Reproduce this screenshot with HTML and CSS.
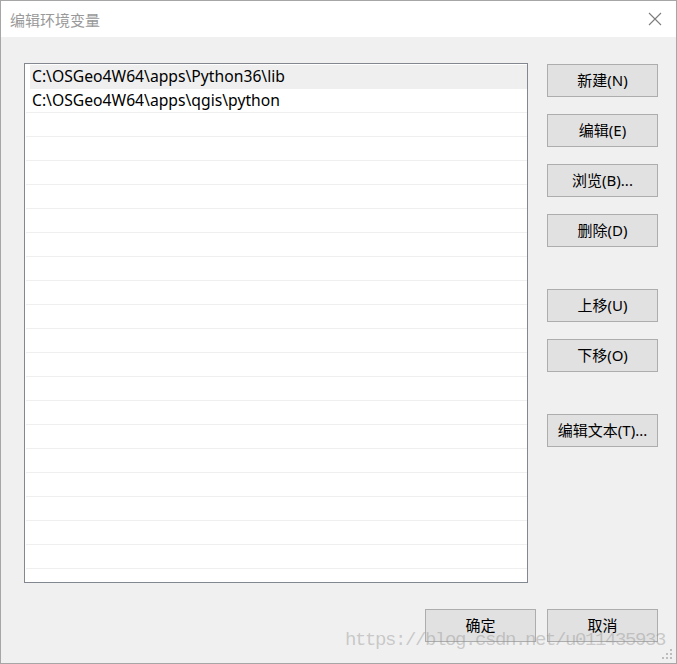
FILE: index.html
```html
<!DOCTYPE html>
<html lang="zh-CN">
<head>
<meta charset="utf-8">
<title>编辑环境变量</title>
<link rel="stylesheet" href="styles.css">
</head>
<body>
<div class="window">
  <div class="titlebar">
    <span class="title">编辑环境变量</span>
    <svg class="close" width="14" height="14" viewBox="0 0 14 14"><path d="M1 1 L13 13 M13 1 L1 13" stroke="#7c7c7c" stroke-width="1.1" fill="none"/></svg>
  </div>
  <div class="body">
    <div class="main">
      <div class="list">
        <div class="row selected">C:\OSGeo4W64\apps\Python36\lib</div>
        <div class="row">C:\OSGeo4W64\apps\qgis\python</div>
        <div class="row"></div><div class="row"></div><div class="row"></div><div class="row"></div>
        <div class="row"></div><div class="row"></div><div class="row"></div><div class="row"></div>
        <div class="row"></div><div class="row"></div><div class="row"></div><div class="row"></div>
        <div class="row"></div><div class="row"></div><div class="row"></div><div class="row"></div>
        <div class="row"></div><div class="row"></div><div class="row"></div>
      </div>
      <div class="side">
        <div class="group">
          <button class="btn">新建(N)</button>
          <button class="btn">编辑(E)</button>
          <button class="btn">浏览(B)...</button>
          <button class="btn">删除(D)</button>
        </div>
        <div class="group">
          <button class="btn">上移(U)</button>
          <button class="btn">下移(O)</button>
        </div>
        <div class="group">
          <button class="btn">编辑文本(T)...</button>
        </div>
      </div>
    </div>
    <div class="footer">
      <button class="btn">确定</button>
      <button class="btn">取消</button>
    </div>
  </div>
  <div class="watermark">https://blog.csdn.net/u011435933</div>
  <svg class="grip" width="12" height="12" viewBox="0 0 12 12">
    <rect x="8" y="0" width="2" height="2" fill="#bdbdbd"/>
    <rect x="4" y="4" width="2" height="2" fill="#bdbdbd"/>
    <rect x="8" y="4" width="2" height="2" fill="#bdbdbd"/>
    <rect x="0" y="8" width="2" height="2" fill="#bdbdbd"/>
    <rect x="4" y="8" width="2" height="2" fill="#bdbdbd"/>
    <rect x="8" y="8" width="2" height="2" fill="#bdbdbd"/>
  </svg>
</div>
</body>
</html>
```

FILE: styles.css
```css
* { box-sizing: border-box; }
html, body { margin: 0; padding: 0; background: #ffffff; }
body {
  font-family: "Noto Sans", "Noto Sans CJK SC", sans-serif;
  font-size: 15px;
  color: #000;
}
.window {
  position: relative;
  width: 677px;
  height: 664px;
  border: 1px solid #a6a6a6;
  background: #f0f0f0;
  display: flex;
  flex-direction: column;
}
.titlebar {
  height: 36px;
  background: #ffffff;
  display: flex;
  align-items: center;
  justify-content: space-between;
  padding: 0 14px 0 9px;
  flex: none;
}
.title {
  font-family: "Noto Sans CJK SC", sans-serif;
  font-size: 15px;
  color: #999999;
  line-height: 16px;
  margin-top: 1px;
}
.close { display: block; }
.body {
  flex: 1;
  display: flex;
  flex-direction: column;
  padding: 26px 18px 0 23px;
}
.main {
  display: flex;
  gap: 19px;
}
.list {
  width: 504px;
  height: 520px;
  border: 1px solid #828790;
  background: #ffffff;
  padding-top: 1px;
  overflow: hidden;
}
.row {
  height: 24px;
  margin-left: 1px;
  border-bottom: 1px solid #efefef;
  padding-left: 6px;
  line-height: 23px;
  white-space: nowrap;
  font-family: "Noto Sans", "Noto Sans CJK SC", sans-serif;
  font-size: 15.7px;
}
.row.selected {
  border-bottom-color: transparent;
  background: linear-gradient(to right, transparent 4px, #efefef 4px);
}
.side {
  display: flex;
  flex-direction: column;
  gap: 42px;
  padding-top: 1px;
}
.group {
  display: flex;
  flex-direction: column;
  gap: 17px;
}
.btn {
  width: 111px;
  height: 33px;
  margin: 0;
  padding: 0;
  border: 1px solid #adadad;
  background: #e1e1e1;
  font-family: "Noto Sans", "Noto Sans CJK SC", sans-serif;
  font-size: 15px;
  color: #000;
  line-height: 31px;
  text-align: center;
}
.footer {
  display: flex;
  justify-content: flex-end;
  gap: 11px;
  padding-top: 26px;
}
.watermark {
  position: absolute;
  left: 344px;
  top: 628px;
  font-family: "Liberation Mono", monospace;
  font-size: 19px;
  letter-spacing: -1.4px;
  color: rgba(150, 150, 150, 0.45);
  white-space: nowrap;
  pointer-events: none;
}
.grip {
  position: absolute;
  right: 2px;
  bottom: 2px;
}
```
